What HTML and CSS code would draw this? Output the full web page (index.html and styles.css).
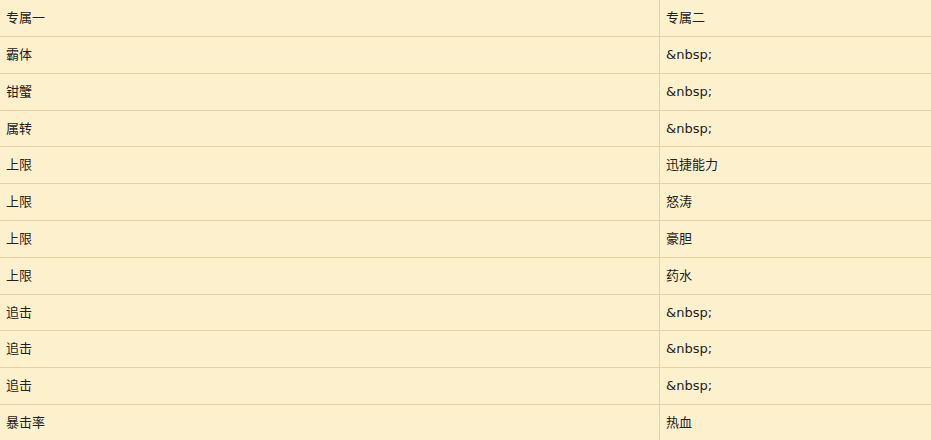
FILE: index.html
```html
<!DOCTYPE html>
<html>
<head>
<meta charset="utf-8">
<link rel="stylesheet" href="styles.css">
</head>
<body>
<table class="tbl">
<tr><td class="c1">专属一</td><td>专属二</td></tr>
<tr><td class="c1">霸体</td><td>&amp;nbsp;</td></tr>
<tr><td class="c1">钳蟹</td><td>&amp;nbsp;</td></tr>
<tr><td class="c1">属转</td><td>&amp;nbsp;</td></tr>
<tr><td class="c1">上限</td><td>迅捷能力</td></tr>
<tr><td class="c1">上限</td><td>怒涛</td></tr>
<tr><td class="c1">上限</td><td>豪胆</td></tr>
<tr><td class="c1">上限</td><td>药水</td></tr>
<tr><td class="c1">追击</td><td>&amp;nbsp;</td></tr>
<tr><td class="c1">追击</td><td>&amp;nbsp;</td></tr>
<tr><td class="c1">追击</td><td>&amp;nbsp;</td></tr>
<tr><td class="c1">暴击率</td><td>热血</td></tr>
</table>
</body>
</html>
```
FILE: styles.css
```css
html, body {
  margin: 0;
  padding: 0;
  background: #fdf0cd;
}
.tbl {
  width: 100%;
  border-collapse: collapse;
  border-spacing: 0;
  background: #fdf0cd;
  font-family: "DejaVu Sans", "Noto Sans CJK SC", sans-serif;
  font-size: 13px;
  color: #222;
}
.tbl td {
  padding: 0 6px;
  line-height: 35.8px;
  height: 35.8px;
  border-bottom: 1px solid #e3d0a6;
  vertical-align: middle;
  white-space: nowrap;
}
.tbl tr:first-child td {
  line-height: 36px;
  height: 36px;
}
.tbl td.c1 {
  width: 647px;
  border-right: 1px solid #e3d0a6;
}
```
